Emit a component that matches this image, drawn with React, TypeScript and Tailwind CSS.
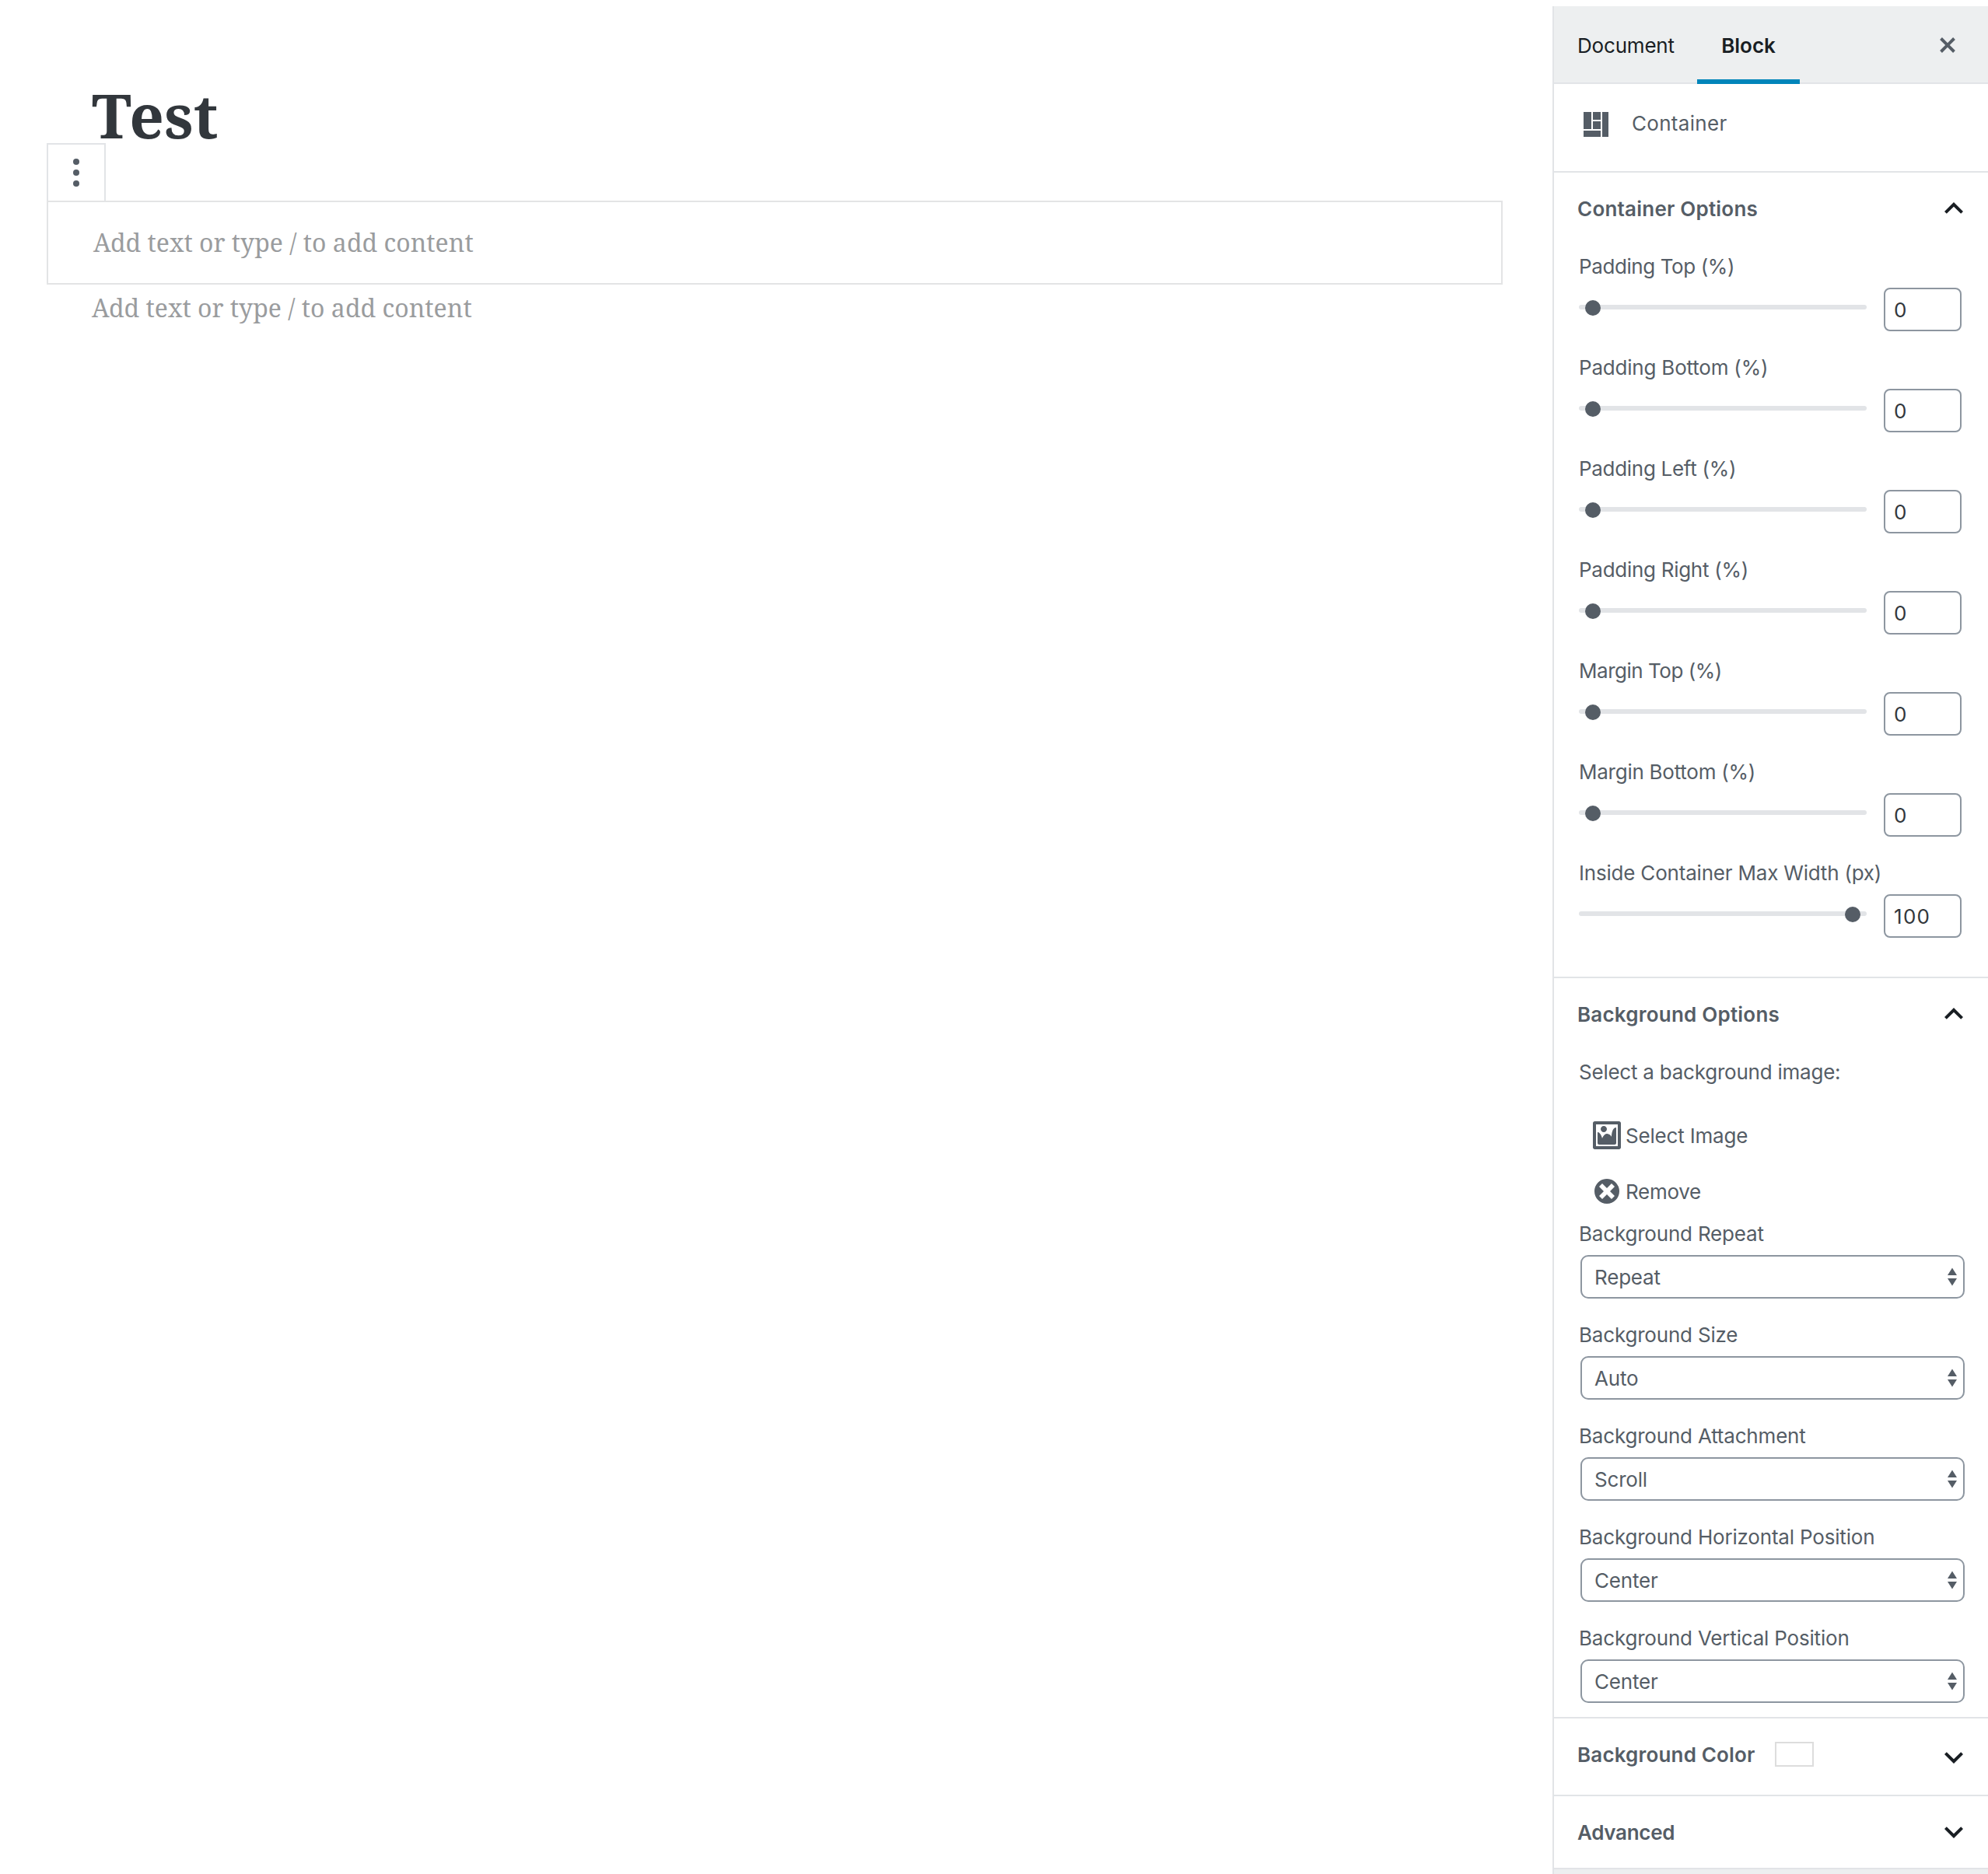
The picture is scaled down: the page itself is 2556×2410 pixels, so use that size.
import React from 'react';

const sliders = [
  { label: 'Padding Top (%)', value: '0', tracking: 'tracking-[-0.4px]' },
  { label: 'Padding Bottom (%)', value: '0', tracking: 'tracking-[-0.2px]' },
  { label: 'Padding Left (%)', value: '0', tracking: 'tracking-[-0.3px]' },
  { label: 'Padding Right (%)', value: '0', tracking: 'tracking-[-0.28px]' },
  { label: 'Margin Top (%)', value: '0', tracking: 'tracking-[-0.48px]' },
  { label: 'Margin Bottom (%)', value: '0', tracking: 'tracking-[-0.25px]' },
  { label: 'Inside Container Max Width (px)', value: '100', tracking: 'tracking-[-0.2px]' },
];

const selects = [
  { label: 'Background Repeat', value: 'Repeat' },
  { label: 'Background Size', value: 'Auto' },
  { label: 'Background Attachment', value: 'Scroll' },
  { label: 'Background Horizontal Position', value: 'Center' },
  { label: 'Background Vertical Position', value: 'Center' },
];

function Dashicon({ path, className = '' }: { path: string; className?: string }) {
  return (
    <svg viewBox="0 0 20 20" className={`size-10 shrink-0 fill-[#555d66] ${className}`}>
      <path d={path} />
    </svg>
  );
}

function Chevron({ up = false }: { up?: boolean }) {
  return (
    <svg viewBox="0 0 24 24" className="size-12 shrink-0 fill-[#191e23]">
      <path
        d={
          up
            ? 'M12,8l-6,6l1.41,1.41L12,10.83l4.59,4.58L18,14L12,8z'
            : 'M7.41,8.59L12,13.17l4.59-4.58L18,10l-6,6l-6-6L7.41,8.59z'
        }
      />
    </svg>
  );
}

function PanelTitle({ children, className = '', up = false }: { children: React.ReactNode; className?: string; up?: boolean }) {
  return (
    <div className={`flex w-full items-start justify-between pl-[30px] pr-5 ${className}`}>
      <div className="flex items-start font-semibold leading-9">{children}</div>
      <Chevron up={up} />
    </div>
  );
}

function SliderRow({ label, value, tracking }: { label: string; value: string; tracking: string }) {
  const atEnd = value !== '0';
  return (
    <div className="h-[130px] pl-8">
      <div className={`h-[46px] whitespace-nowrap pt-px leading-9 ${tracking}`}>{label}</div>
      <div className="flex items-start">
        <div className="relative mt-[22px] h-1.5 w-[370px] rounded-full bg-[#e2e4e7]">
          <div className={`absolute -top-1.5 size-5 rounded-full bg-[#555d66] ${atEnd ? 'right-2' : 'left-2'}`} />
        </div>
        <div className="ml-[22px] h-14 w-[100px] rounded-lg border-2 border-[#8d96a0] pl-[11px] pt-[9px] text-[#32373c]">
          <span className={atEnd ? 'tracking-[1.3px]' : ''}>{value}</span>
        </div>
      </div>
    </div>
  );
}

function SelectRow({ label, value }: { label: string; value: string }) {
  return (
    <div className="h-[130px]">
      <div className="h-[46px] whitespace-nowrap pl-8 pt-px leading-9">{label}</div>
      <div className="ml-[34px] flex h-14 w-[494px] items-center justify-between rounded-[10px] border-2 border-[#8d96a0] pl-4 pr-2">
        <span className="pt-0.5">{value}</span>
        <svg viewBox="0 0 12 24" className="h-6 w-3 fill-[#555d66]">
          <path d="M6 0.5L12 10H0ZM0 14H12L6 23.5Z" />
        </svg>
      </div>
    </div>
  );
}

export default function App() {
  return (
    <div className="flex h-[2410px] w-[2556px] overflow-hidden bg-white">
      <main className="w-[1996px] shrink-0 pl-[60px] font-['Noto_Serif',serif]">
        <h1 className="mt-[93px] h-[91px] pl-[58px] text-[78px] font-bold leading-[110px] tracking-[0.2px] text-[#32373c]">
          Test
        </h1>
        <div className="flex h-[74px] w-[76px] items-center justify-center border-2 border-b-0 border-[#e2e4e7] bg-white">
          <svg viewBox="0 0 8 36" className="h-9 w-2 fill-[#555d66]">
            <circle cx="4" cy="4" r="4" />
            <circle cx="4" cy="18" r="4" />
            <circle cx="4" cy="32" r="4" />
          </svg>
        </div>
        <div className="h-[108px] w-[1872px] border-2 border-[#e3e4e5] pl-[58px] pt-[23px] text-[32px] leading-[58px] text-[#9a9c9e]">
          Add text or type / to add content
        </div>
        <p className="pl-[58px] pt-px text-[32px] leading-[58px] text-[#9a9c9e]">
          Add text or type / to add content
        </p>
      </main>

      <aside className="mt-2 flex h-[2402px] w-[560px] flex-col border-l-2 border-[#e2e4e7] bg-[#edeff0] font-[Inter,sans-serif] text-[26px] leading-9 tracking-[-0.19px] text-[#555d66]">
        <header className="flex h-[100px] shrink-0 border-b-2 border-[#e2e4e7] text-[#191e23]">
          <div className="flex w-[184px] pl-[30px] pt-[33px]">Document</div>
          <div className="h-[100px] w-[132px] border-b-[6px] border-[#0085ba] pt-[33px] text-center font-semibold tracking-normal">
            Block
          </div>
          <Dashicon
            className="ml-[170px] mt-[30px]"
            path="M14.95 6.46L11.41 10l3.54 3.54-1.41 1.41L10 11.42l-3.53 3.53-1.42-1.42L8.58 10 5.05 6.47l1.42-1.42L10 8.58l3.54-3.53z"
          />
        </header>

        <section className="flex h-[114px] shrink-0 items-start border-b-2 border-[#e2e4e7] bg-white pl-[34px] pt-8">
          <Dashicon path="M2 2h5v11H2V2zm6 0h5v5H8V2zm6 0h4v16h-4V2zM8 8h5v5H8V8zm-6 6h11v4H2v-4z" />
          <span className="ml-[26px] mt-px tracking-[0.3px]">Container</span>
        </section>

        <section className="h-[1036px] shrink-0 border-b-2 border-[#e2e4e7] bg-white pt-[22px]">
          <PanelTitle up className="h-20 tracking-[0.22px] [&>div]:pt-[7px]">Container Options</PanelTitle>
          {sliders.map((s) => (
            <SliderRow key={s.label} {...s} />
          ))}
        </section>

        <section className="h-[952px] shrink-0 border-b-2 border-[#e2e4e7] bg-white pt-[22px]">
          <PanelTitle up className="h-20 tracking-[0.22px] [&>div]:pt-[7px]">Background Options</PanelTitle>
          <p className="h-20 pl-8 pt-px tracking-[-0.23px]">Select a background image:</p>
          <div className="flex h-[72px] pl-12">
            <Dashicon path="M2.25 1h15.5c.69 0 1.25.56 1.25 1.25v15.5c0 .69-.56 1.25-1.25 1.25H2.25C1.56 19 1 18.44 1 17.75V2.25C1 1.56 1.56 1 2.25 1zM17 17V3H3v14h14zM10 6c0-1.1-.9-2-2-2s-2 .9-2 2 .9 2 2 2 2-.9 2-2zm3 5s0-6 3-6v10c0 .55-.45 1-1 1H5c-.55 0-1-.45-1-1V8c2 0 3 4 3 4s1-3 3-3 3 2 3 2z" />
            <span className="ml-1 mt-[3px]">Select Image</span>
          </div>
          <div className="flex h-14 pl-12">
            <Dashicon path="M10 2c4.42 0 8 3.58 8 8s-3.58 8-8 8-8-3.58-8-8 3.58-8 8-8zm5 11l-3-3 3-3-2-2-3 3-3-3-2 2 3 3-3 3 2 2 3-3 3 3z" />
            <span className="ml-1 mt-[3px] tracking-[-0.3px]">Remove</span>
          </div>
          {selects.map((s) => (
            <SelectRow key={s.label} {...s} />
          ))}
        </section>

        <section className="h-[100px] shrink-0 border-b-2 border-[#e2e4e7] bg-white pt-[26px]">
          <PanelTitle className="tracking-[0.17px] [&>div]:pt-[3px]">
            Background Color
            <span className="ml-[25px] mt-px h-8 w-[50px] border-2 border-[#ddd]" />
          </PanelTitle>
        </section>

        <section className="h-[94px] shrink-0 border-b-2 border-[#e2e4e7] bg-white pt-[22px]">
          <PanelTitle className="tracking-[-0.3px] [&>div]:pt-[7px]">Advanced</PanelTitle>
        </section>
      </aside>
    </div>
  );
}
